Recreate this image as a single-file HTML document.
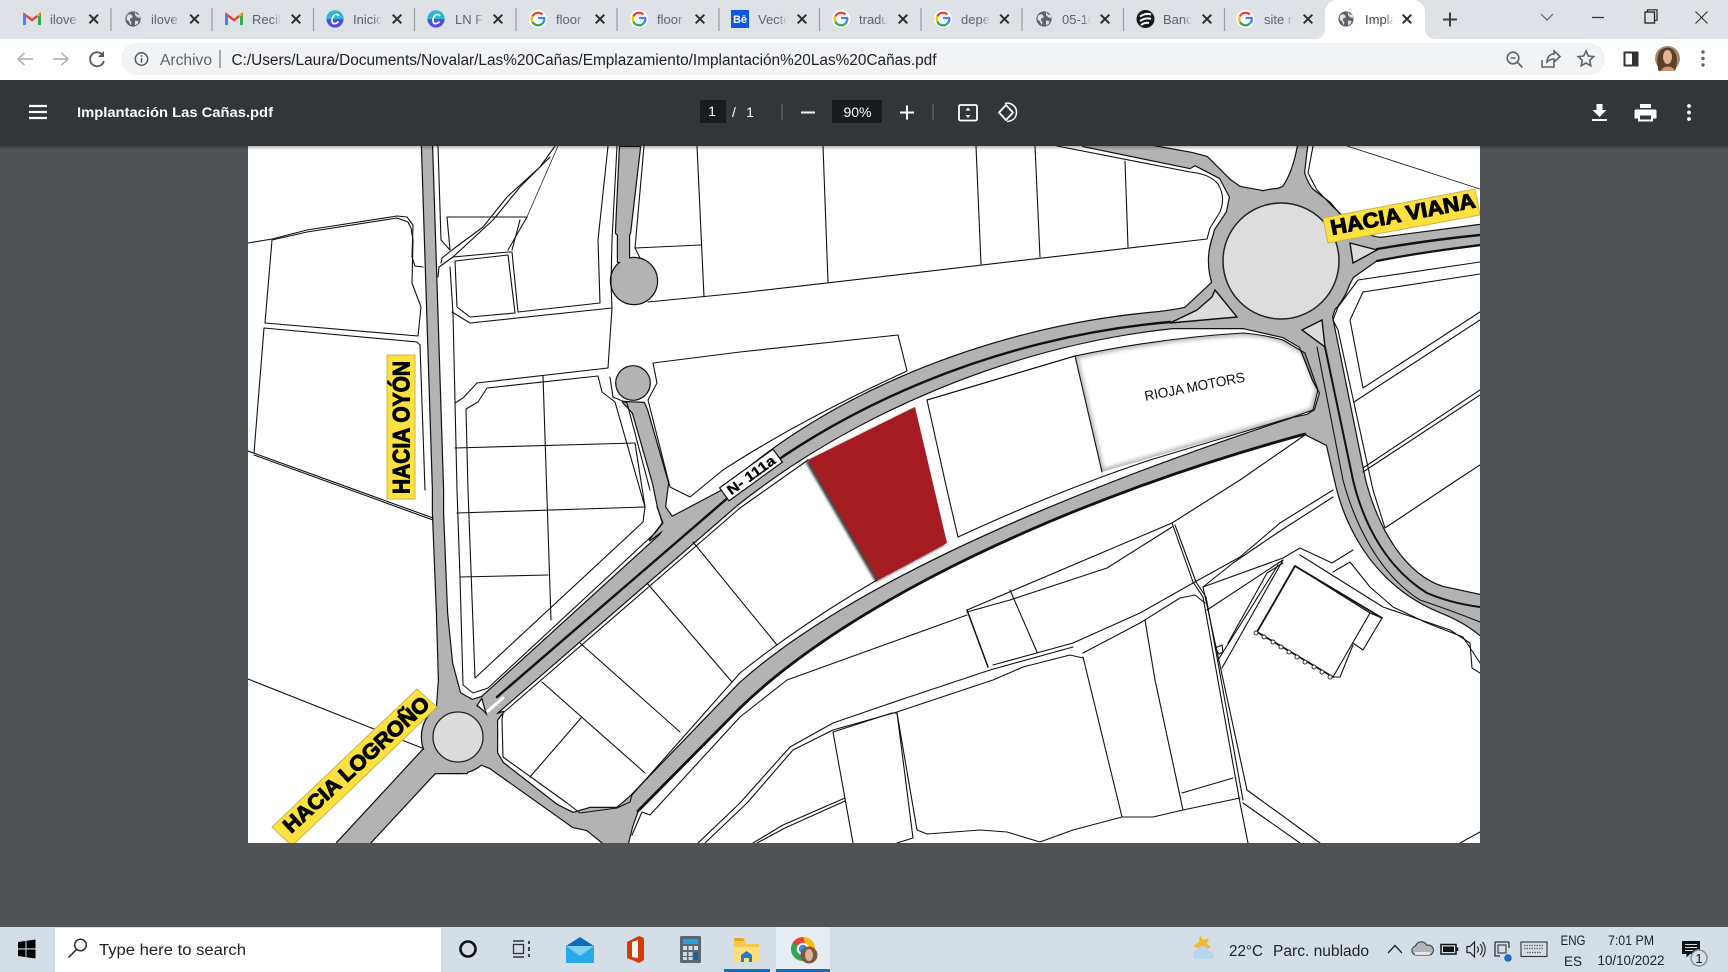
<!DOCTYPE html>
<html lang="es"><head><meta charset="utf-8"><title>Implantación Las Cañas.pdf</title>
<style>
html,body{margin:0;padding:0;background:#505356;width:1728px;height:972px;overflow:hidden}
svg{display:block;filter:blur(.3px)}
text{font-family:"Liberation Sans",sans-serif}
.t{font-size:13px;fill:#5f6368}
.l{fill:none;stroke:#111;stroke-width:1.1;stroke-linejoin:round;stroke-linecap:round}
.x{stroke:#2b2d30;stroke-width:2;fill:none}
.sep{stroke:#9a9da1;stroke-width:1.2}
.tb{font-size:14px;fill:#fff}
.tk{font-size:15.5px;fill:#222}
.tr{font-size:13.5px;fill:#222}
.ic{fill:none;stroke:#5f6368;stroke-width:1.6}
</style></head><body>
<svg width="1728" height="972" viewBox="0 0 1728 972" xmlns="http://www.w3.org/2000/svg">
<defs>
<linearGradient id="f" x1="0" x2="1" y1="0" y2="0"><stop offset="0" stop-color="#dee1e6" stop-opacity="0"/><stop offset=".5" stop-color="#dee1e6"/><stop offset="1" stop-color="#dee1e6"/></linearGradient>
<linearGradient id="fw" x1="0" x2="1" y1="0" y2="0"><stop offset="0" stop-color="#fff" stop-opacity="0"/><stop offset=".5" stop-color="#fff"/><stop offset="1" stop-color="#fff"/></linearGradient>
<linearGradient id="sh" x1="0" x2="0" y1="0" y2="1"><stop offset="0" stop-color="#000" stop-opacity=".28"/><stop offset="1" stop-color="#000" stop-opacity="0"/></linearGradient>
<clipPath id="page"><rect x="248" y="146" width="1232" height="697"/></clipPath>
<filter id="rs" x="-20%" y="-20%" width="140%" height="140%"><feDropShadow dx="-2.500" dy="2" stdDeviation="1.200" flood-color="#000" flood-opacity=".75"/></filter>
<filter id="bl" x="-10%" y="-20%" width="120%" height="140%"><feGaussianBlur stdDeviation="2"/></filter>
<clipPath id="rj"><path d="M1075 356Q1160 338 1243 333 1270 335 1283 340L1305 353 1318 390 1313 410 1293 417 1102 472z"/></clipPath>
<g id="gm"><path d="M-7.500 6V-4.500L0 1 7.500-4.500V6" fill="none" stroke="#ea4335" stroke-width="2.400"/><path d="M-7.500 6V-4.500" stroke="#4285f4" stroke-width="3"/><path d="M7.500 6V-4.500" stroke="#34a853" stroke-width="3"/><path d="M5 -3L7.500 -5" stroke="#fbbc04" stroke-width="2.400"/></g>
<g id="gl"><circle r="7.600" fill="#5f6368"/><path d="M-6-3.500l3-1.500 2 1.200 1 2.300-2.600.5-.5 2.500 1.600 1.600-.8 3L-4 2.500-6.500.5zM2-7l2 2.500 2.700.5.3 3-2.500-.5L2 -4z" fill="#dee1e6"/><path d="M2 1.500l3.500.5-1 3-2.500 1.200z" fill="#dee1e6"/></g>
<g id="cv"><circle r="8.600" fill="#4f4ee0"/><path d="M-8.600 0A8.600 8.600 0 0 1 0-8.600 8.600 8.600 0 0 1 8.600 0z" fill="#27b9d6"/><path d="M3.500-3.500C2-6-3-4-3 1.500c0 4 3.500 3.800 6 1.500" fill="none" stroke="#fff" stroke-width="1.700" stroke-linecap="round"/></g>
<g id="go"><circle r="9" fill="#fff"/><path d="M0-1h6.200a6.300 6.300 0 0 1-1.900 5.600" fill="none" stroke="#4285f4" stroke-width="2.300"/><path d="M4.300 4.600A6.300 6.300 0 0 1-5.600 2.800" fill="none" stroke="#34a853" stroke-width="2.300"/><path d="M-5.600 2.800a6.300 6.300 0 0 1 0-5.600" fill="none" stroke="#fbbc04" stroke-width="2.300"/><path d="M-5.600-2.800A6.300 6.300 0 0 1 4.400-4.500" fill="none" stroke="#ea4335" stroke-width="2.300"/></g>
<g id="xx"><path class="x" d="M-4.300-4.300L4.300 4.300M4.300-4.300L-4.300 4.300"/></g>
<g id="net">
<path d="M422 146L433 490 433 513 437 613 439 680 437 707 460 730 482 697 472 700 460 693 452 663 447 613 443 513 443 490 432 146z"/>
<path d="M482 697L660 535 672 517 723 490C825 395 990 328 1150 313Q1183 310 1203 303L1215 288 1243 328 1173 328C1010 345 850 415 737 505L497 713 490 725z"/>
<circle cx="458" cy="737" r="36"/>
<path d="M423 750L337 843 370 843 435 773 467 773 470 750z"/>
<path d="M470 760L490 768 573 827 587 830 603 843 628 843 632 827 638 810 740 707C850 600 1070 497 1305 433L1307 415 1293 418C1060 495 850 585 740 683L630 797 617 808 590 808 573 813 557 805 503 763 497 753 497 720 503 712 480 720z"/>
<path d="M620 147L640 147 630 233 629 235 629 262 618 262 618 235 616 233z"/>
<circle cx="634" cy="281" r="23"/>
<circle cx="633" cy="383" r="16.700"/>
<path d="M623 402L633 413 653 483 658 507 663 523 650 540 690 510 672 517 665 507 668 483 647 410 644 403z"/>
<circle cx="1281" cy="261" r="72"/>
<path d="M1083 146L1190 168 1195 165 1220 178 1230 197 1227 212 1215 230 1210 250 1281 261 1262 191 1240 187 1230 180 1207 157 1192 153 1153 146z"/>
<path d="M1240 187Q1262 196 1283 187 1293 173 1298 146L1307 146 1304 173Q1308 185 1313 190L1330 203 1340 215 1281 261z"/>
<path d="M1340 215L1357 233 1380 238 1480 225 1480 245 1417 253 1377 260 1353 277 1337 307 1300 270z"/>
<path d="M1215 280L1170 322 1243 328 1283 337 1300 347 1313 380 1320 393 1315 410 1307 415 1293 418 1303 433 1327 445 1335 480 1365 480 1332 317 1340 290 1281 260z"/>
<path d="M1335 480C1348 540 1385 590 1440 612Q1465 622 1480 635V595L1443 587C1405 575 1378 530 1365 480z"/>
</g>
</defs>

<!-- backgrounds -->
<rect width="1728" height="972" fill="#505356"/>
<rect width="1728" height="39" fill="#dee1e6"/>
<rect y="39" width="1728" height="41" fill="#fff"/>
<rect x="121" y="43" width="1484" height="32" rx="16" fill="#f1f3f4"/>
<path d="M1316 39a10 10 0 0 0 9-9V12a12 12 0 0 1 12-12h76a12 12 0 0 1 12 12v18a10 10 0 0 0 9 9z" fill="#fff"/>

<!-- MAP -->
<rect x="248" y="146" width="1232" height="697" fill="#fff"/>
<g clip-path="url(#page)">
<use href="#net" fill="#111" stroke="#111" stroke-width="2.400" stroke-linejoin="round"/>
<use href="#net" fill="#b3b3b3"/>

<!-- roundabouts / islands -->
<circle cx="458" cy="737" r="25" fill="#dcdcdc" stroke="#222" stroke-width="1.300"/>
<circle cx="1281" cy="261" r="58" fill="#dddddd" stroke="#222" stroke-width="1.500"/>
<path d="M1215 290L1237 317 1170 323 1197 310 1212 297z" fill="#dcdcdc" stroke="#111" stroke-width="1.400"/>
<path d="M1322 320L1325 347 1302 330z" fill="#dcdcdc" stroke="#111" stroke-width="1.400"/>
<path d="M1350 243L1377 250 1353 263z" fill="#dcdcdc" stroke="#111" stroke-width="1.400"/>

<!-- road dividers -->
<path class="l" style="stroke-width:2.400" d="M497 697L723 502C830 410 995 337 1170 322"/>
<path class="l" style="stroke:#fff;stroke-width:3" d="M488 711L503 698"/>
<path class="l" style="stroke-width:2.800" d="M638 811L740 708C850 601 1070 498 1305 434"/>
<path class="l" style="stroke-width:2.400" d="M1377 249Q1430 240 1480 235"/>
<path class="l" style="stroke-width:2.200" d="M1377 261Q1417 253 1480 245"/>
<path class="l" style="stroke-width:2" d="M1325 347L1353 480C1365 530 1390 570 1427 593Q1450 603 1480 607"/>
<path class="l" d="M1317 347L1343 480C1355 525 1380 575 1420 600Q1450 610 1480 622"/>

<!-- red plot -->
<path d="M915 407L947 543 878 580 808 460z" fill="#a41a23" filter="url(#rs)"/>

<!-- plot lines: left side -->
<path class="l" d="M248 243L272 239 307 230 397 216 407 217 413 225 412 257 415 266 423 267"/>
<path class="l" d="M272 240L265 323 418 336 421 307 412 283 413 240 411 228 408 222 397 218 307 232z"/>
<path class="l" d="M425 490L420 345 417 342 264 328 254 453"/>
<path class="l" d="M248 451L433 518"/>
<path class="l" d="M254 455L433 520"/>
<path class="l" d="M248 679L422 748"/>
<path class="l" d="M438 146L441 240 450 250"/>
<path class="l" d="M450 267L453 313 457 490 460 577 463 685 473 693 488 688 655 533 663 523 657 507"/>
<path class="l" d="M452 312L470 323 612 308 608 368 477 383 463 398 455 403"/>
<path class="l" d="M598 376L487 388 478 402 466 409 468 490 475 678 643 522 645 507 635 443"/>
<path class="l" d="M598 376L602 392 615 402 645 507"/>
<path class="l" d="M455 448L635 443"/>
<path class="l" d="M457 513L645 507"/>
<path class="l" d="M460 577L548 575"/>
<path class="l" d="M543 376L551 620"/>
<path class="l" d="M455 261L508 255 515 313 470 317 457 307z"/>
<path class="l" d="M453 257L508 252 512 252 518 312"/>
<path class="l" d="M527 217L508 250"/>
<path class="l" d="M520 220L512 250"/>
<path class="l" d="M447 217L527 217"/>
<path class="l" d="M447 217L450 250"/>
<path class="l" style="stroke-width:.7" d="M527 217L558 146"/>
<path class="l" d="M555 146L540 167 507 197 483 227 452 250 442 258 441 263"/>
<path class="l" d="M550 157L520 187 493 220 453 257 439 267 438 277"/>
<path class="l" d="M608 146L598 240 600 303 518 312"/>
<path class="l" d="M617 146L612 240 611 283 612 308"/>
<path class="l" d="M644 146L635 248 640 258"/>
<path class="l" d="M635 248L701 245"/>
<path class="l" d="M697 146L704 297"/>
<path class="l" d="M648 302L740 293 1207 239"/>
<path class="l" d="M823 146L828 282"/>
<path class="l" d="M976 146L981 264"/>
<path class="l" d="M1035 146L1040 257"/>
<path class="l" d="M1125 161L1128 247"/>
<path class="l" d="M1057 146L1190 172Q1210 174 1218 184 1226 197 1220 212L1210 228 1207 239"/>
<!-- plot above main road -->
<path class="l" d="M653 363L740 352 898 335 907 371Q800 420 723 470L690 497 670 487 648 400 657 383z"/>
<path class="l" d="M610 377L613 397 627 403 650 490"/>
<!-- plots below main road -->
<path class="l" d="M503 713L740 508 808 460"/>
<path class="l" d="M877 580Q800 625 740 673L632 795 630 802 617 808 580 813 567 803 503 757 502 720 503 713"/>
<path class="l" d="M693 542L777 645"/>
<path class="l" d="M647 583L732 682"/>
<path class="l" d="M580 643L680 732"/>
<path class="l" d="M542 682L645 773"/>
<path class="l" d="M581 718L530 777"/>
<!-- plots next to red + Rioja -->
<path d="M1075 356Q1160 338 1243 333 1270 335 1283 340L1305 353 1318 390 1313 410 1293 417 1102 472z" fill="none" stroke="#000" stroke-width="5" opacity=".32" filter="url(#bl)" clip-path="url(#rj)"/>
<path class="l" d="M927 400L947 490 958 537Q1060 490 1150 460L1293 417 1313 410 1318 390 1305 353 1283 340Q1265 335 1243 333 1160 338 1075 356z"/>
<path class="l" d="M1075 356L1102 472"/>
<path class="l" d="M1075 356L927 400"/>
<!-- right side plots -->
<path class="l" d="M1313 146L1308 173 1317 190 1333 207 1342 215"/>
<path class="l" style="stroke-width:.8" d="M1347 146L1480 189"/>
<path class="l" d="M1338 330L1333 320 1338 307 1358 280 1480 262"/>
<path class="l" d="M1363 292L1480 274"/>
<path class="l" d="M1363 292L1350 320 1363 388 1480 312"/>
<path class="l" d="M1338 330L1373 490 1385 528 1457 480 1480 465"/>
<path class="l" d="M1354 402L1480 320"/>
<path class="l" d="M1363 468L1480 390"/>
<path class="l" d="M1363 472L1480 395"/>
<!-- lower land -->
<path class="l" d="M632 835L642 812 650 815 740 717 787 680 967 615"/>
<path class="l" d="M967 610L1172 523 1240 480 1305 435"/>
<path class="l" d="M967 612L1010 600 1107 568 1172 527"/>
<path class="l" d="M1010 590L1037 652"/>
<path class="l" style="stroke-width:1.500" d="M967 610L988 667"/>
<path class="l" d="M1172 523L1193 582 1203 597 1240 803 1248 843"/>
<path class="l" d="M1175 525L1196 582 1206 597 1243 800"/>
<path class="l" d="M1203 587L1247 790 1320 843"/>
<path class="l" d="M1243 803L1300 843"/>
<path class="l" d="M993 665L1073 643 1140 613 1193 583 1240 557 1280 523 1333 490"/>
<path class="l" d="M698 843L740 803 790 747 833 723 900 700 990 670 1073 647"/>
<path class="l" d="M705 843L747 803 793 750 833 730 897 712 993 680 1023 667 1070 655 1083 658"/>
<path class="l" d="M1083 653L1140 623 1180 598 1195 595 1205 603"/>
<path class="l" d="M1083 657L1122 817"/>
<path class="l" d="M1145 620L1155 680 1183 810"/>
<path class="l" d="M1182 793L1233 778"/>
<path class="l" d="M1240 798L1183 810 1153 817 1122 817 1073 830 1040 842 1007 832 980 830 927 834 917 830 897 713"/>
<path class="l" d="M833 732L853 843"/>
<path class="l" d="M892 713L897 713 913 838 897 843"/>
<path class="l" d="M833 732L892 713"/>
<path class="l" d="M753 843L783 825 845 798"/>
<path class="l" d="M757 843L785 828 845 801"/>
<path class="l" d="M1333 497L1277 533 1233 563 1203 587"/>
<!-- building -->
<path class="l" d="M1295 566L1370 613 1333 677"/>
<path class="l" style="stroke-width:1.800" d="M1333 677L1257 632 1295 566 1382 618"/>
<path class="l" d="M1370 613L1382 618 1363 650 1353 643"/>
<path class="l" d="M1333 677L1340 677 1353 645"/>
<g fill="#fff" stroke="#222" stroke-width=".9"><circle cx="1256" cy="633" r="2"/><circle cx="1264" cy="637" r="2"/><circle cx="1273" cy="642" r="2"/><circle cx="1281" cy="647" r="2"/><circle cx="1289" cy="652" r="2"/><circle cx="1297" cy="657" r="2"/><circle cx="1305" cy="662" r="2"/><circle cx="1314" cy="667" r="2"/><circle cx="1322" cy="672" r="2"/><circle cx="1330" cy="677" r="2"/></g>
<path class="l" d="M1283 558L1300 548 1332 563 1353 550"/>
<path class="l" d="M1222 668L1283 560"/>
<path class="l" d="M1218 660L1278 565"/>
<path class="l" d="M1228 643L1267 573 1283 563"/>
<path class="l" d="M1207 610L1283 560"/>
<path class="l" d="M1203 587L1283 558"/>
<path class="l" d="M1300 555L1383 607 1450 630 1470 643 1472 668 1480 673"/>
<path class="l" d="M1333 572L1350 562 1370 587 1393 607 1427 623 1463 637 1480 663"/>
<path class="l" d="M1460 843L1480 832"/>
<path class="l" d="M1215 648L1222 645 1223 652 1219 654z"/>

<!-- labels -->
<rect x="387" y="355" width="28" height="144" fill="#fde141" stroke="#c9b54a"/>
<text transform="translate(409.500 494) rotate(-90)" font-size="24" font-weight="700" stroke="#000" stroke-width="1" textLength="133" lengthAdjust="spacingAndGlyphs">HACIA OYÓN</text>
<path d="M1323 218L1475 189 1480 215 1328 243z" fill="#fde141" stroke="#c9b54a"/>
<text transform="translate(1332 235) rotate(-10.900)" font-size="21" font-weight="700" stroke="#000" stroke-width="1" textLength="147" lengthAdjust="spacingAndGlyphs">HACIA VIANA</text>
<path d="M417 689L437 707 292 846 272 827z" fill="#fde141" stroke="#c9b54a"/>
<text transform="translate(291 834) rotate(-42.500)" font-size="21" font-weight="700" stroke="#000" stroke-width="1" textLength="190" lengthAdjust="spacingAndGlyphs">HACIA LOGROÑO</text>
<g transform="translate(751 475) rotate(-36)"><rect x="-33" y="-8" width="66" height="16" fill="#fff" stroke="#111" stroke-width="1.200"/><text x="0" y="5" font-size="14" font-weight="700" text-anchor="middle" stroke="#000" stroke-width=".25" textLength="56" lengthAdjust="spacingAndGlyphs">N- 111a</text></g>
<text transform="translate(1145.500 401) rotate(-11)" font-size="14" fill="#111" textLength="102" lengthAdjust="spacingAndGlyphs">RIOJA MOTORS</text>
</g>

<!-- PDF toolbar -->
<rect y="146" width="1728" height="4" fill="url(#sh)"/>
<rect y="80" width="1728" height="66" fill="#323639"/>
<path d="M29 106h18M29 112h18M29 118h18" stroke="#fff" stroke-width="2.200"/>
<text x="77" y="117" class="tb" font-weight="700" textLength="196" lengthAdjust="spacingAndGlyphs">Implantación Las Cañas.pdf</text>
<rect x="700" y="100" width="26" height="23" fill="#191b1c"/>
<text x="712" y="116" class="tb" text-anchor="middle">1</text>
<text x="734" y="117" class="tb" text-anchor="middle">/</text>
<text x="750" y="117" class="tb" text-anchor="middle">1</text>
<path d="M782 104v16M933 104v16" stroke="#6a6d70" stroke-width="1.200"/>
<path d="M801 112.500h14" stroke="#fff" stroke-width="2"/>
<rect x="832" y="100" width="50" height="23" fill="#191b1c"/>
<text x="857.500" y="117" class="tb" text-anchor="middle">90%</text>
<path d="M900 112.500h14M907 105.500v14" stroke="#fff" stroke-width="2"/>
<rect x="959" y="105" width="18" height="15.500" rx="1.500" fill="none" stroke="#fff" stroke-width="1.800"/>
<path d="M968 107.500l-2.500 3h5zM968 118l-2.500-3h5z" fill="#fff"/>
<path d="M1006 105l7 7.500-7 7.500-7-7.500z" fill="none" stroke="#fff" stroke-width="1.800"/>
<path d="M1005 103.500c6-1.500 12 3 11.500 9.500-.4 5-4 8-9.500 8.500" fill="none" stroke="#fff" stroke-width="1.500"/>
<path d="M1596.500 104h6v6h4l-7 7-7-7h4z" fill="#fff"/><path d="M1592 120h15" stroke="#fff" stroke-width="2"/>
<path d="M1640 104h11v4h-11z" fill="#fff"/><path d="M1636 109.500h19a1.500 1.500 0 0 1 1.500 1.500v7.500h-3.500v3h-15v-3h-3.500V111a1.500 1.500 0 0 1 1.500-1.500z" fill="#fff"/><rect x="1640" y="115.500" width="11" height="4" fill="#323639"/>
<circle cx="1689" cy="106" r="1.900" fill="#fff"/><circle cx="1689" cy="112.500" r="1.900" fill="#fff"/><circle cx="1689" cy="119" r="1.900" fill="#fff"/>

<!-- tabs -->
<path class="sep" d="M111 8v23M212 8v23M313.500 8v23M414.500 8v23M516 8v23M617 8v23M719 8v23M819.500 8v23M921 8v23M1022 8v23M1123.500 8v23M1224.500 8v23"/>
<use href="#gm" x="32" y="19"/><use href="#gl" x="133" y="19"/><use href="#gm" x="234" y="19"/><use href="#cv" x="335" y="19"/><use href="#cv" x="436" y="19"/><use href="#go" x="538" y="19"/><use href="#go" x="639" y="19"/>
<rect x="731" y="10" width="18" height="18" fill="#0b57e6"/><text x="740" y="23" font-size="11" font-weight="700" fill="#fff" text-anchor="middle">Bē</text>
<use href="#go" x="841" y="19"/><use href="#go" x="943" y="19"/><use href="#gl" x="1044" y="19"/>
<circle cx="1145.500" cy="19" r="9" fill="#17191b"/><path d="M1140 16.500q5.500-4 11-2M1140 21q5.500-4 11-2M1141 25q4-3 8-2" fill="none" stroke="#fff" stroke-width="2"/>
<use href="#go" x="1245.500" y="19"/><use href="#gl" x="1346" y="19"/>
<g class="t">
<text x="50" y="24">ilove</text><text x="151" y="24">ilove</text><text x="252" y="24">Recib</text><text x="353" y="24">Inicio</text><text x="455" y="24">LN Fr</text><text x="556" y="24">floor</text><text x="657" y="24">floor</text><text x="758" y="24">Vecto</text><text x="859" y="24">tradu</text><text x="961" y="24">depe</text><text x="1062" y="24">05-10</text><text x="1163" y="24">Banc</text><text x="1264" y="24">site r</text><text x="1365" y="24" style="fill:#444">Impla</text>
</g>
<g fill="url(#f)"><rect x="70" y="8" width="18" height="24"/><rect x="171" y="8" width="18" height="24"/><rect x="272" y="8" width="18" height="24"/><rect x="373" y="8" width="18" height="24"/><rect x="475" y="8" width="18" height="24"/><rect x="576" y="8" width="18" height="24"/><rect x="677" y="8" width="18" height="24"/><rect x="778" y="8" width="18" height="24"/><rect x="879" y="8" width="18" height="24"/><rect x="981" y="8" width="18" height="24"/><rect x="1082" y="8" width="18" height="24"/><rect x="1183" y="8" width="18" height="24"/><rect x="1284" y="8" width="18" height="24"/></g>
<rect x="1385" y="8" width="18" height="24" fill="url(#fw)"/>
<use href="#xx" x="93.700" y="19"/><use href="#xx" x="194.500" y="19"/><use href="#xx" x="296" y="19"/><use href="#xx" x="397" y="19"/><use href="#xx" x="498" y="19"/><use href="#xx" x="600" y="19"/><use href="#xx" x="700" y="19"/><use href="#xx" x="802" y="19"/><use href="#xx" x="903" y="19"/><use href="#xx" x="1004.500" y="19"/><use href="#xx" x="1105" y="19"/><use href="#xx" x="1207" y="19"/><use href="#xx" x="1308" y="19"/><use href="#xx" x="1407" y="19"/>
<path d="M1443 19.500h14M1450 12.500v14" stroke="#3c4043" stroke-width="2"/>
<path d="M1541 14l6 6 6-6" fill="none" stroke="#5f6368" stroke-width="1.200"/>
<path d="M1592 17.500h12" stroke="#333" stroke-width="1.300"/>
<rect x="1645" y="12" width="9.500" height="11" fill="none" stroke="#222" stroke-width="1.300"/><path d="M1647.500 12v-2.200h9.500v10.500h-2.500" fill="none" stroke="#222" stroke-width="1.200"/>
<path d="M1695.500 11.500l12 12M1707.500 11.500l-12 12" stroke="#333" stroke-width="1.100"/>

<!-- address bar -->
<path d="M33 59H18M24.500 53l-6.500 6 6.500 6" fill="none" stroke="#b4b7bb" stroke-width="1.700"/>
<path d="M53 59h15M61.500 53l6.500 6-6.500 6" fill="none" stroke="#b4b7bb" stroke-width="1.700"/>
<path d="M103 55.500a7 7 0 1 0 .9 5.500" fill="none" stroke="#55585c" stroke-width="1.800"/><path d="M104 51v6h-6z" fill="#55585c"/>
<circle cx="141.500" cy="59" r="6.200" fill="none" stroke="#55585c" stroke-width="1.500"/><path d="M141.500 58v4.500M141.500 55.200v1.500" stroke="#55585c" stroke-width="1.500"/>
<text x="160" y="65" font-size="15.500" fill="#5f6368" textLength="52" lengthAdjust="spacingAndGlyphs">Archivo</text>
<path d="M220 50v18" stroke="#6b6e72" stroke-width="1.100"/>
<text x="231.500" y="65" font-size="15.500" fill="#202124" textLength="705" lengthAdjust="spacingAndGlyphs">C:/Users/Laura/Documents/Novalar/Las%20Cañas/Emplazamiento/Implantación%20Las%20Cañas.pdf</text>
<circle cx="1513" cy="58" r="5.800" class="ic"/><path class="ic" d="M1517.500 62.500l5 5M1510.500 58h5"/>
<path class="ic" d="M1542 60v7h12v-4M1547 62c0-5 3-8 7-8v-3l6 5.500-6 5.500v-3c-3 0-5 1-7 3z"/>
<path class="ic" d="M1586 51l2.300 5 5.400.6-4 3.700 1.100 5.400-4.800-2.700-4.800 2.700 1.100-5.400-4-3.700 5.400-.6z"/>
<rect x="1624.500" y="52.500" width="13" height="13" fill="none" stroke="#333" stroke-width="2"/><rect x="1632" y="52" width="6" height="14" fill="#333"/>
<circle cx="1667.500" cy="58.500" r="12.500" fill="#a4896c"/><path d="M1658.500 71c-2-9-2-19 4-22 6-3 12-1 14 7 1 6 0 11-1 14z" fill="#5c3f29"/><ellipse cx="1667.500" cy="57" rx="4.500" ry="7" fill="#dcb594"/><path d="M1661 71c2-6 12-6 14 0z" fill="#c9966f"/>
<circle cx="1703" cy="52" r="1.700" fill="#5f6368"/><circle cx="1703" cy="58.500" r="1.700" fill="#5f6368"/><circle cx="1703" cy="65" r="1.700" fill="#5f6368"/>

<!-- taskbar -->
<rect y="927" width="1728" height="45" fill="#d3dee7"/>
<path d="M18 942l7.500-1.100v7.500H18zM26.500 940.800l9-1.300v8.900h-9zM18 949.500h7.500v7.600L18 956zM26.500 949.500h9v9l-9-1.300z" fill="#000"/>
<rect x="55" y="928" width="386" height="44" fill="#fff"/>
<circle cx="80.500" cy="945" r="5.800" fill="none" stroke="#222" stroke-width="1.400"/><path d="M76.500 949.500l-8 8" stroke="#222" stroke-width="1.500"/>
<text x="99" y="955" class="tk" fill="#333" textLength="147" lengthAdjust="spacingAndGlyphs">Type here to search</text>
<circle cx="468" cy="949" r="7.500" fill="none" stroke="#111" stroke-width="2.600"/>
<path d="M513 941h11M513 957h11" stroke="#333" stroke-width="1.400"/><rect x="513.500" y="944.500" width="10" height="9" fill="none" stroke="#333" stroke-width="1.300"/><path d="M529 941v3M529 947v4M529 954v3" stroke="#333" stroke-width="1.800"/>
<path d="M580 937l14 9v17h-28v-17z" fill="#0f6cbd"/><path d="M566 946h28v17h-28z" fill="#29a8ea"/><path d="M566 946l14 10 14-10" fill="#7fd0f5"/>
<path d="M627 942l12-6 5 2v22l-5 3-12-5z" fill="#d83b01"/><path d="M632 942l6-2v18l-6-1z" fill="#f6f8fa"/>
<rect x="680" y="936" width="21" height="27" rx="1.500" fill="#5b6670"/><rect x="683" y="939" width="15" height="5" fill="#2aa1e0"/><rect x="683" y="946" width="4" height="4" fill="#d5dbe0"/><rect x="688.500" y="946" width="4" height="4" fill="#d5dbe0"/><rect x="694" y="946" width="4" height="4" fill="#d5dbe0"/><rect x="683" y="952" width="4" height="4" fill="#d5dbe0"/><rect x="688.500" y="952" width="4" height="4" fill="#d5dbe0"/><rect x="694" y="952" width="4" height="8" fill="#1f5f95"/><rect x="683" y="957" width="4" height="3" fill="#d5dbe0"/><rect x="688.500" y="957" width="4" height="3" fill="#d5dbe0"/>
<path d="M734 941h10l2 3h13v18h-25z" fill="#f2c94c"/><path d="M734 938h9l2 3h-11z" fill="#e8a717"/><path d="M734 947h25v15h-25z" fill="#fadf7a"/><path d="M741 962v-7l5.500-4 5.500 4v7h-3v-4h-5v4z" fill="#2a78c9"/>
<rect x="776" y="927" width="54" height="45" fill="#e6edf3"/>
<rect x="724" y="969" width="46" height="3" fill="#0f6fbf"/><rect x="776" y="969" width="54" height="3" fill="#0f6fbf"/>
<circle cx="803" cy="949" r="12" fill="#ea4335"/><path d="M803 949l-10.400-6a12 12 0 0 0 4.400 16.400z" fill="#34a853"/><path d="M803 949l9 7a12 12 0 0 1-15 3.500z" fill="#34a853"/><path d="M803 937a12 12 0 0 1 12 12h-8z" fill="#fbbc04"/><circle cx="803" cy="949" r="5.200" fill="#4285f4" stroke="#fff" stroke-width="2"/>
<circle cx="809" cy="955" r="8.500" fill="#7a5a42"/><ellipse cx="809" cy="955" rx="4" ry="6" fill="#dcb594"/>

<!-- tray -->
<path d="M1200 935l3 5 6-2-2 6 4 3-6 3-6-1-6-3 6-4z" fill="#f5b82e"/>
<path d="M1196 959a4.500 4.500 0 0 1 .7-8.800 6.500 6.500 0 0 1 12.500 1.500 4 4 0 0 1 4.800 3.800c0 2-1.500 3.500-3.500 3.500z" fill="#b6d4ec"/>
<text x="1229" y="956" class="tk" textLength="34" lengthAdjust="spacingAndGlyphs">22°C</text>
<text x="1273" y="956" class="tk" textLength="96" lengthAdjust="spacingAndGlyphs">Parc. nublado</text>
<path d="M1388 953l7-7.500 7 7.500" fill="none" stroke="#222" stroke-width="1.300"/>
<path d="M1416 955a4.500 4.500 0 0 1-.5-8.900 6 6 0 0 1 11.200-.8 5 5 0 0 1 3.300 9.700z" fill="#b0b4b8" stroke="#333" stroke-width="1"/><path d="M1415 955h15v-3h-15z" fill="#fff" opacity=".7"/>
<rect x="1441" y="944.500" width="15" height="9.500" fill="none" stroke="#111" stroke-width="1.500"/><rect x="1443" y="946.500" width="11" height="5.500" fill="#111"/><rect x="1456.500" y="947.500" width="1.800" height="3.500" fill="#111"/>
<path d="M1467 946.500h3l4.500-4.500v15l-4.500-4.500h-3z" fill="none" stroke="#222" stroke-width="1.200"/><path d="M1477 946.500a4 4 0 0 1 0 6M1480 944a8 8 0 0 1 0 11M1482.500 942a12 12 0 0 1 0 15" fill="none" stroke="#222" stroke-width="1.100"/>
<path d="M1495 942h14M1495 942v14h5M1509 942v6" fill="none" stroke="#333" stroke-width="1.300"/><rect x="1498" y="945" width="8" height="8" fill="none" stroke="#444" stroke-width="1.200"/>
<circle cx="1508" cy="958" r="3.800" fill="#1a6fc4"/>
<rect x="1521" y="942" width="26" height="14.500" fill="none" stroke="#333" stroke-width="1.100"/><path d="M1524 945.500h20M1524 948.500h20M1527 952.500h15" stroke="#666" stroke-width="1.300" stroke-dasharray="1.500 1"/>
<text x="1573" y="945" class="tr" text-anchor="middle" textLength="25" lengthAdjust="spacingAndGlyphs">ENG</text>
<text x="1573" y="966" class="tr" text-anchor="middle">ES</text>
<text x="1631" y="945" class="tr" text-anchor="middle" textLength="46" lengthAdjust="spacingAndGlyphs">7:01 PM</text>
<text x="1631" y="965" class="tr" text-anchor="middle" textLength="67" lengthAdjust="spacingAndGlyphs">10/10/2022</text>
<path d="M1682 941h18v13h-10l-3.500 3.500V954H1682z" fill="#111"/><path d="M1685 944.500h12M1685 947.500h12M1685 950.500h8" stroke="#d3dee7" stroke-width="1"/>
<circle cx="1699" cy="958" r="8" fill="#d3dee7" stroke="#8a8d90" stroke-width="1.400"/>
<text x="1699" y="963" font-size="13" fill="#111" text-anchor="middle">1</text>
</svg>
</body></html>
